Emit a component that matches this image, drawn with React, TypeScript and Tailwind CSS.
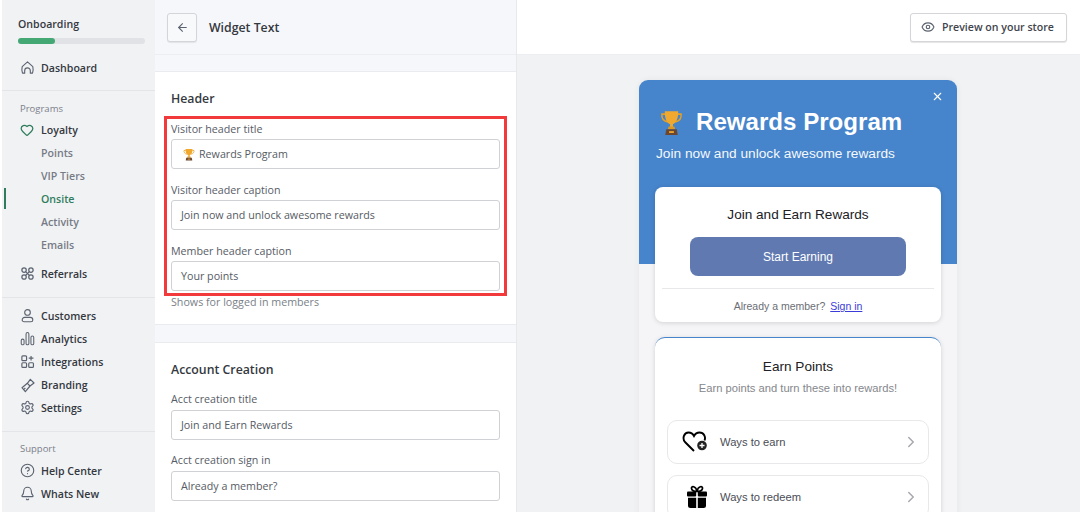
import { ArrowLeft, Bell, ChevronRight, CircleHelp, Eye, Heart, Settings, X } from "lucide-react"
import type { ReactNode } from "react"

function Trophy({ width, height }: { width: number; height: number }) {
  return (
    <svg width={width} height={height} viewBox="0 0 24 24" preserveAspectRatio="none" className="shrink-0">
      <path d="M5.500 4.500H2c-.5 3.500 1.500 6 6 7M18.500 4.500H22c.5 3.500-1.500 6-6 7" fill="none" stroke="#e8a020" strokeWidth="1.500" />
      <path d="M5 2h14c0 6-1.500 10-5.500 11.500V16h-3v-2.500C6.500 12 5 8 5 2z" fill="#f0a92e" />
      <path d="M9 15.500h6l.8 2.500H8.200z" fill="#e09a20" />
      <path d="M6.500 18h11l1 5h-13z" fill="#6b4630" />
      <rect x="9.500" y="19.700" width="5" height="1.600" fill="#f0a92e" />
    </svg>
  )
}

function HouseIcon() {
  return (
    <svg width="15" height="15" viewBox="0 0 24 24" fill="none" stroke="currentColor" strokeWidth="1.800" strokeLinejoin="round">
      <path d="M3.500 10.500L12 3l8.500 7.500c1 4 .5 7.500-.5 10.500h-3.500v-4a4.500 4.500 0 0 0-9 0v4H4c-1-3-1.500-6.500-.5-10.500z" />
    </svg>
  )
}

function ReferralIcon() {
  return (
    <svg width="15" height="15" viewBox="0 0 24 24" fill="none" stroke="currentColor" strokeWidth="2">
      <circle cx="6.500" cy="6.500" r="3.500" />
      <circle cx="17.500" cy="6.500" r="3.500" />
      <circle cx="6.500" cy="17.500" r="3.500" />
      <circle cx="17.500" cy="17.500" r="3.500" />
      <path d="M9 9l6 6M15 9l-6 6" />
    </svg>
  )
}

function UserIcon() {
  return (
    <svg width="15" height="15" viewBox="0 0 24 24" fill="none" stroke="currentColor" strokeWidth="1.800">
      <circle cx="12" cy="7" r="4.500" />
      <path d="M7.500 15h9a4 4 0 0 1 4 4v0a3 3 0 0 1-3 3h-11a3 3 0 0 1-3-3v0a4 4 0 0 1 4-4z" />
    </svg>
  )
}

function BarsIcon() {
  return (
    <svg width="15" height="15" viewBox="0 0 24 24" fill="none" stroke="currentColor" strokeWidth="1.700">
      <rect x="2" y="13" width="4.500" height="9" rx="2.200" />
      <rect x="9.700" y="2.500" width="4.500" height="19.500" rx="2.200" />
      <rect x="17.500" y="8" width="4.500" height="14" rx="2.200" />
    </svg>
  )
}

function IntegrationIcon() {
  return (
    <svg width="15" height="15" viewBox="0 0 24 24" fill="none" stroke="currentColor" strokeWidth="1.900">
      <rect x="3" y="3" width="7.500" height="7.500" rx="1.500" />
      <rect x="3" y="14" width="7.500" height="7.500" rx="1.500" />
      <rect x="14" y="14" width="7.500" height="7.500" rx="1.500" />
      <path d="M17.700 3v7.500M14 6.700h7.500" />
    </svg>
  )
}

function BrandingIcon() {
  return (
    <svg width="16" height="16" viewBox="0 0 24 24" fill="none" stroke="currentColor" strokeWidth="1.800" strokeLinejoin="round">
      <path d="M15.500 3.500l5.500 5.500-6 4.500-4-4z" />
      <path d="M11 9.500l-8 6.500 5 6 7-8.500" />
      <path d="M6 18.500l2-2" />
    </svg>
  )
}

function HeartPlus() {
  return (
    <svg width="26" height="24" viewBox="0 0 26 24" className="shrink-0">
      <path d="M12 21L3 12C0 8.500 2 2.500 6.500 2.500 9 2.500 11 4 12 6 13 4 15 2.500 17.500 2.500 22 2.500 24 7 22.500 10.500" fill="none" stroke="#000" strokeWidth="1.900" />
      <circle cx="20" cy="15.500" r="4.800" fill="#222" />
      <path d="M20 13v5M17.500 15.500h5" stroke="#fff" strokeWidth="1.300" />
    </svg>
  )
}

function Gift() {
  return (
    <svg width="22" height="24" viewBox="0 0 22 24" className="shrink-0">
      <path d="M11 6.500C10 1 5 .5 5.500 3.500c.3 2 3 3 5.500 3zM11 6.500c1-5.500 6-6 5.500-3-.3 2-3 3-5.500 3z" fill="none" stroke="#000" strokeWidth="1.700" />
      <rect x="1" y="6.500" width="9.200" height="5" rx="1" fill="#000" />
      <rect x="11.800" y="6.500" width="9.200" height="5" rx="1" fill="#000" />
      <path d="M2 12.800h8.200V23H4.500A2.500 2.500 0 0 1 2 20.500zM11.800 12.800H20v7.700a2.500 2.500 0 0 1-2.500 2.500h-5.700z" fill="#000" />
    </svg>
  )
}

function NavItem({ icon, label, className = "" }: { icon: ReactNode; label: string; className?: string }) {
  return (
    <div className={"flex h-[23px] items-center " + className}>
      <span className="flex w-[21px] shrink-0 text-[#5c6370]">{icon}</span>
      <span className="pt-[2px] text-[10.600px] font-[550] text-[#343840]">{label}</span>
    </div>
  )
}

function SubItem({ label, active }: { label: string; active?: boolean }) {
  return (
    <div className={"relative flex h-[23px] items-center pl-[21px] pt-[2px] text-[10.600px] font-[550] " + (active ? "text-[#2f7d5d]" : "text-[#767b86]")}>
      {active && <span className="absolute left-[-16px] top-[1px] h-[21px] w-[2px] bg-[#2f7d5d]" />}
      {label}
    </div>
  )
}

function Sidebar() {
  return (
    <aside className="ml-[2px] flex h-full w-[153px] shrink-0 flex-col bg-[#f1f2f4]">
      <div className="h-[91px] border-b border-[#e4e5e8] px-[16px] pt-[16px]">
        <div className="text-[10.600px] font-[550] leading-[16px] text-[#343840]">Onboarding</div>
        <div className="mt-[6px] h-[6px] w-[127px] rounded-full bg-[#e0e2e6]">
          <div className="h-full w-[37px] rounded-full bg-[#44a875]" />
        </div>
        <div className="ml-[2px] mt-[12px]"><NavItem icon={<HouseIcon />} label="Dashboard" /></div>
      </div>
      <div className="h-[207px] border-b border-[#e4e5e8] pl-[18px] pt-[11px]">
        <div className="h-[14px] text-[9.500px] leading-[14px] text-[#7b808a]">Programs</div>
        <NavItem className="mt-[2px]" icon={<Heart size={14} strokeWidth={2.200} className="text-[#2f7d5d]" />} label="Loyalty" />
        <SubItem label="Points" />
        <SubItem label="VIP Tiers" />
        <SubItem label="Onsite" active />
        <SubItem label="Activity" />
        <SubItem label="Emails" />
        <NavItem className="mt-[6px]" icon={<ReferralIcon />} label="Referrals" />
      </div>
      <div className="h-[134px] border-b border-[#e4e5e8] pl-[18px] pt-[6px]">
        <NavItem icon={<UserIcon />} label="Customers" />
        <NavItem icon={<BarsIcon />} label="Analytics" />
        <NavItem icon={<IntegrationIcon />} label="Integrations" />
        <NavItem icon={<BrandingIcon />} label="Branding" />
        <NavItem icon={<Settings size={15} strokeWidth={1.800} />} label="Settings" />
      </div>
      <div className="pl-[18px] pt-[10px]">
        <div className="h-[14px] text-[9.500px] leading-[14px] text-[#7b808a]">Support</div>
        <NavItem className="mt-[3px]" icon={<CircleHelp size={15} strokeWidth={1.800} />} label="Help Center" />
        <NavItem icon={<Bell size={15} strokeWidth={1.800} />} label="Whats New" />
      </div>
    </aside>
  )
}

function Field({ label, children, hint, tall }: { label: string; children: ReactNode; hint?: string; tall?: boolean }) {
  return (
    <div>
      <div className={(tall ? "h-[21px]" : "h-[20px]") + " pt-[2px] text-[10.700px] leading-[16px] text-[#575c66]"}>{label}</div>
      <div className="flex h-[30px] items-center gap-[4px] rounded-[3px] border border-[#cfd1d5] bg-white px-[9px] text-[10.700px] text-[#565b64]">
        {children}
      </div>
      {hint && <div className="mt-[3px] text-[10.700px] leading-[16px] text-[#7a7f88]">{hint}</div>}
    </div>
  )
}

function FormPanel() {
  return (
    <section className="flex h-full w-[362px] shrink-0 flex-col border-r border-[#e8e9ec] bg-[#f6f7fb]">
      <div className="flex h-[55px] shrink-0 items-center gap-[12px] border-b border-[#eceef2] pl-[12px]">
        <div className="flex h-[29px] w-[30px] items-center justify-center rounded-[3px] border border-[#d3d5d9] bg-[#f8f9fb] shadow-[0_1px_1px_rgba(0,0,0,0.08)]">
          <ArrowLeft size={13} className="text-[#5c6370]" />
        </div>
        <span className="pt-[2px] text-[12.300px] font-[550] text-[#343840]">Widget Text</span>
      </div>
      <div className="mt-[16px] h-[254px] shrink-0 border-y border-[#e9ebef] bg-white px-[16px] pt-[18px]">
        <h2 className="text-[12.300px] font-[550] leading-[18px] text-[#343840]">Header</h2>
        <div className="relative mt-[11px] flex flex-col gap-[11px]">
          <span className="absolute left-[-7px] right-[-7px] top-[-3px] h-[180px] border-[3px] border-[#f23a3c]" />
          <Field label="Visitor header title"><span className="ml-[2px]"><Trophy width={12} height={13} /></span>Rewards Program</Field>
          <Field label="Visitor header caption">Join now and unlock awesome rewards</Field>
          <Field label="Member header caption" hint="Shows for logged in members">Your points</Field>
        </div>
      </div>
      <div className="mt-[17px] flex-1 border-t border-[#e9ebef] bg-white px-[16px] pt-[18px]">
        <h2 className="text-[12.300px] font-[550] leading-[18px] text-[#343840]">Account Creation</h2>
        <div className="mt-[10px] flex flex-col gap-[10px]">
          <Field tall label="Acct creation title">Join and Earn Rewards</Field>
          <Field tall label="Acct creation sign in">Already a member?</Field>
        </div>
      </div>
    </section>
  )
}

function WayRow({ icon, label }: { icon: ReactNode; label: string }) {
  return (
    <div className="flex h-[44px] items-center rounded-[10px] border border-[#e8e8ea] bg-white pl-[14px] pr-[8px]">
      <span className="flex w-[38px] shrink-0">{icon}</span>
      <span className="flex-1 text-[11.200px] text-[#4a4d55]">{label}</span>
      <ChevronRight size={18} className="text-[#a6a8ad]" />
    </div>
  )
}

function Preview() {
  return (
    <section className="flex min-w-0 flex-1 flex-col bg-[#f1f2f4]">
      <div className="flex h-[55px] shrink-0 items-center justify-end border-b border-[#eceef1] bg-white pr-[13px]">
        <div className="flex h-[29px] w-[157px] items-center gap-[7px] rounded-[3px] border border-[#d3d5d9] bg-white pl-[10px] text-[10.600px] font-[550] text-[#3f444d] shadow-[0_1px_1px_rgba(0,0,0,0.1)]">
          <Eye size={14} className="text-[#5c6370]" />
          <span className="pt-[1px]">Preview on your store</span>
        </div>
      </div>
      <div className="flex-1 overflow-hidden pl-[122px] pt-[25px] font-['Liberation_Sans',sans-serif]">
        <div className="relative h-[500px] w-[318px] rounded-t-[9px] bg-[#f5f5f7] shadow-[0_0_6px_rgba(0,0,0,0.06)]">
          <div className="h-[184px] rounded-t-[9px] bg-[#4684cb] pl-[17px] pt-[24px] text-white">
            <X size={13} className="absolute right-[13px] top-[10px]" />
            <div className="flex h-[36px] items-center gap-[13px] pl-[4px] text-[24.100px] font-bold leading-[36px]">
              <Trophy width={23} height={27} />
              Rewards Program
            </div>
            <div className="mt-[4px] text-[13.700px] leading-[20px] opacity-95">Join now and unlock awesome rewards</div>
          </div>
          <div className="absolute left-[16px] top-[107px] flex w-[286px] flex-col gap-[15px]">
            <div className="h-[135px] rounded-[8px] bg-white px-[7px] pt-[19px] shadow-[0_1px_5px_rgba(0,0,0,0.14)]">
              <div className="text-center text-[13.600px] leading-[18px] text-[#202124]">Join and Earn Rewards</div>
              <div className="mx-auto mt-[13px] flex h-[39px] w-[216px] items-center justify-center rounded-[8px] bg-[#6079b0] pt-[1px] text-[12px] text-white">
                Start Earning
              </div>
              <div className="mt-[12px] flex h-[33px] items-center justify-center gap-[5px] border-t border-[#e8e8ea] pt-[4px] text-[10.500px] text-[#6b6e75]">
                Already a member? <span className="text-[#3b3bd8] underline">Sign in</span>
              </div>
            </div>
            <div className="rounded-[10px] border-t-[1.500px] border-[#4684cb] bg-white px-[12px] pt-[20px] pb-[20px] shadow-[0_1px_5px_rgba(0,0,0,0.14)]">
              <div className="text-center text-[13.600px] leading-[18px] text-[#202124]">Earn Points</div>
              <div className="mt-[4px] text-center text-[11.200px] leading-[16px] text-[#85878c]">Earn points and turn these into rewards!</div>
              <div className="mt-[24px] flex flex-col gap-[11px]">
                <WayRow icon={<HeartPlus />} label="Ways to earn" />
                <WayRow icon={<span className="pl-[4px]"><Gift /></span>} label="Ways to redeem" />
              </div>
            </div>
          </div>
        </div>
      </div>
    </section>
  )
}

export default function App() {
  return (
    <div className="flex h-[512px] w-[1080px] overflow-hidden bg-white font-['Open_Sans',sans-serif]">
      <Sidebar />
      <FormPanel />
      <Preview />
    </div>
  )
}
